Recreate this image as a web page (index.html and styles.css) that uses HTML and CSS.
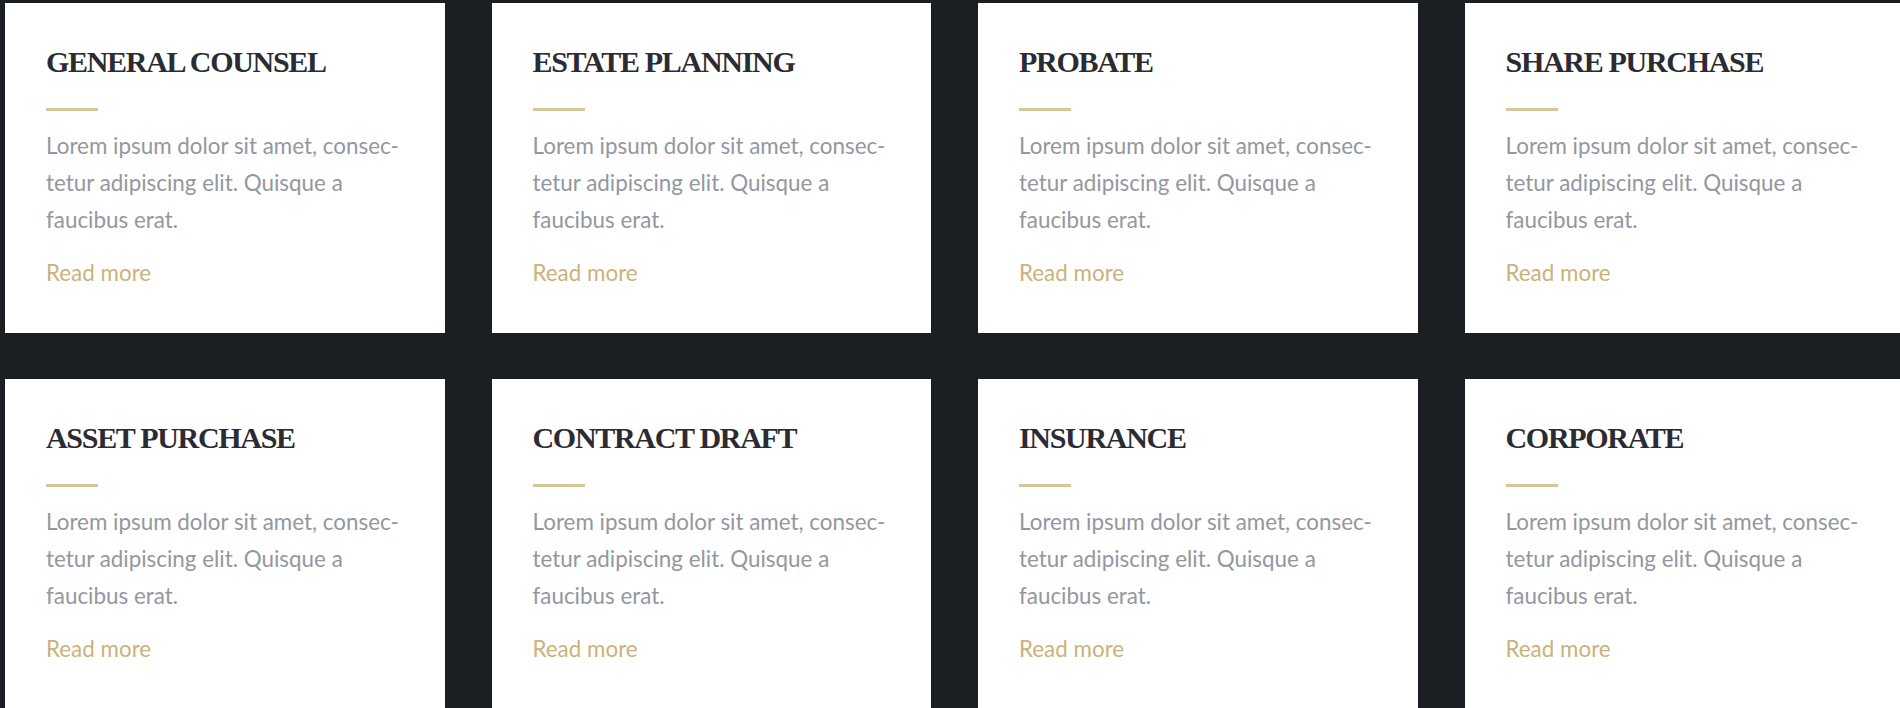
FILE: index.html
```html
<!DOCTYPE html>
<html lang="en">
<head>
<meta charset="utf-8">
<title>Practice areas</title>
<link rel="stylesheet" href="styles.css">
</head>
<body>
<main class="grid">
  <article class="card">
    <h2 class="card-title">GENERAL COUNSEL</h2>
    <span class="rule"></span>
    <p class="card-text">Lorem ipsum dolor sit amet, consec-<br>tetur adipiscing elit. Quisque a<br>faucibus erat.</p>
    <a class="card-link" href="#">Read more</a>
  </article>
  <article class="card">
    <h2 class="card-title">ESTATE PLANNING</h2>
    <span class="rule"></span>
    <p class="card-text">Lorem ipsum dolor sit amet, consec-<br>tetur adipiscing elit. Quisque a<br>faucibus erat.</p>
    <a class="card-link" href="#">Read more</a>
  </article>
  <article class="card">
    <h2 class="card-title">PROBATE</h2>
    <span class="rule"></span>
    <p class="card-text">Lorem ipsum dolor sit amet, consec-<br>tetur adipiscing elit. Quisque a<br>faucibus erat.</p>
    <a class="card-link" href="#">Read more</a>
  </article>
  <article class="card">
    <h2 class="card-title">SHARE PURCHASE</h2>
    <span class="rule"></span>
    <p class="card-text">Lorem ipsum dolor sit amet, consec-<br>tetur adipiscing elit. Quisque a<br>faucibus erat.</p>
    <a class="card-link" href="#">Read more</a>
  </article>
  <article class="card">
    <h2 class="card-title">ASSET PURCHASE</h2>
    <span class="rule"></span>
    <p class="card-text">Lorem ipsum dolor sit amet, consec-<br>tetur adipiscing elit. Quisque a<br>faucibus erat.</p>
    <a class="card-link" href="#">Read more</a>
  </article>
  <article class="card">
    <h2 class="card-title">CONTRACT DRAFT</h2>
    <span class="rule"></span>
    <p class="card-text">Lorem ipsum dolor sit amet, consec-<br>tetur adipiscing elit. Quisque a<br>faucibus erat.</p>
    <a class="card-link" href="#">Read more</a>
  </article>
  <article class="card">
    <h2 class="card-title">INSURANCE</h2>
    <span class="rule"></span>
    <p class="card-text">Lorem ipsum dolor sit amet, consec-<br>tetur adipiscing elit. Quisque a<br>faucibus erat.</p>
    <a class="card-link" href="#">Read more</a>
  </article>
  <article class="card">
    <h2 class="card-title">CORPORATE</h2>
    <span class="rule"></span>
    <p class="card-text">Lorem ipsum dolor sit amet, consec-<br>tetur adipiscing elit. Quisque a<br>faucibus erat.</p>
    <a class="card-link" href="#">Read more</a>
  </article>
</main>
</body>
</html>
```
FILE: styles.css
```css
html, body {
  margin: 0;
  padding: 0;
  background: #1b1e22;
  overflow: hidden;
}

.grid {
  display: grid;
  grid-template-columns: repeat(4, 439.5px);
  column-gap: 47px;
  row-gap: 46px;
  padding: 3px 0 0 5px;
  width: 1920px;
}

.card {
  background: #ffffff;
  height: 330px;
  box-sizing: border-box;
  padding: 41px 40px 0 41px;
  display: flex;
  flex-direction: column;
  align-items: flex-start;
}

.card-title {
  margin: 0;
  font-family: "Liberation Serif", "Times New Roman", serif;
  font-weight: 700;
  font-size: 30px;
  line-height: 36px;
  letter-spacing: -1.3px;
  color: #2b2c33;
}

.rule {
  display: block;
  width: 52px;
  height: 3px;
  margin-top: 28px;
  background: #d8c69a;
}

.card-text {
  margin: 16px 0 0;
  font-family: Lato, "Open Sans", sans-serif;
  font-size: 22.4px;
  line-height: 37px;
  color: #9497a0;
}

.card-link {
  margin-top: 15.5px;
  font-family: Lato, "Open Sans", sans-serif;
  font-size: 22.4px;
  line-height: 37px;
  color: #cab27c;
  text-decoration: none;
}
```
